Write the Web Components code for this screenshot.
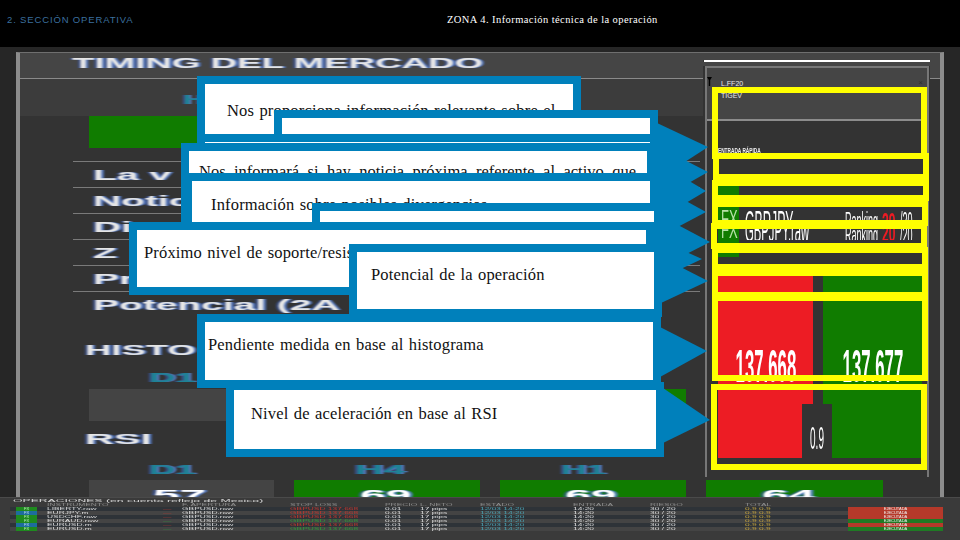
<!DOCTYPE html>
<html lang="es"><head><meta charset="utf-8"><title>Zona 4</title>
<style>
html,body{margin:0;padding:0;background:#000}
body{width:960px;height:540px;overflow:hidden;font-family:"Liberation Sans",sans-serif}
</style></head><body>
<x-slide>
  <x-header slot="head"></x-header>
  <x-market slot="main"></x-market>
  <x-orders slot="foot"></x-orders>

  <x-callout slot="over" x="197" y="76" w="384" h="66" px="22" py="17">Nos proporciona información relevante sobre el</x-callout>
  <x-callout slot="over" x="274" y="110" w="384" h="41" tip="708,147" up="123" down="180"></x-callout>
  <x-callout slot="over" x="197" y="134" w="461" h="40" tip="708,172" up="146" down="201"></x-callout>
  <x-callout slot="over" x="181" y="143" w="474" h="80" tip="706,191" up="160" down="222" px="10" py="11" just>Nos informará si hay noticia próxima referente al activo que</x-callout>
  <x-callout slot="over" x="184" y="173" w="474" h="60" tip="706,212" up="185" down="238" px="19" py="14">Información sobre posibles divergencias</x-callout>
  <x-callout slot="over" x="312" y="203" w="350" h="50" tip="710,242" up="216" down="267"></x-callout>
  <x-callout slot="over" x="129" y="222" w="525" h="73" tip="702,259" up="237" down="282" px="7" py="13">Próximo nivel de soporte/resistencia</x-callout>
  <x-callout slot="over" x="349" y="244" w="313" h="73" tip="708,281" up="257" down="303" px="14" py="13">Potencial de la operación</x-callout>
  <x-callout slot="over" x="197" y="314" w="464" h="74" tip="707,351" up="327" down="377" px="3" py="13">Pendiente medida en base al histograma</x-callout>
  <x-callout slot="over" x="226" y="382" w="438" h="75" tip="710,420" up="388" down="443" px="17" py="14">Nivel de aceleración en base al RSI</x-callout>

  <x-frame slot="over" x="712" y="87" w="215" h="72"></x-frame>
  <x-frame slot="over" x="713" y="153" w="216" h="27"></x-frame>
  <x-frame slot="over" x="712" y="180" w="217" h="21"></x-frame>
  <x-frame slot="over" x="712" y="201" w="216" h="25"></x-frame>
  <x-frame slot="over" x="711" y="223" w="216" h="26"></x-frame>
  <x-frame slot="over" x="712" y="247" w="216" h="23"></x-frame>
  <x-frame slot="over" x="712" y="270" w="216" h="28"></x-frame>
  <x-frame slot="over" x="712" y="295" w="216" h="86"></x-frame>
  <x-frame slot="over" x="711" y="384" w="216" h="86"></x-frame>
</x-slide>

<script>
function def(name, css, html, init){
  customElements.define(name, class extends HTMLElement{
    connectedCallback(){
      if(this.shadowRoot) return;
      const r=this.attachShadow({mode:"open"});
      r.innerHTML="<style>"+css+"</style>"+(typeof html==="function"?html(this):html);
      if(init) init(this,r);
    }
  });
}
def("x-slide",`:host{display:block;position:relative;width:960px;height:540px;overflow:hidden}
 .col{display:flex;flex-direction:column;height:100%}`,
 `<div class="col"><slot name="head"></slot><slot name="main"></slot><slot name="foot"></slot></div><slot name="over"></slot>`);

def("x-header",`:host{display:grid;grid-template-columns:447px 1fr;height:47px;background:#000;padding:0 0 0 7px;box-sizing:border-box;align-items:start}
 div{padding-top:13px;line-height:14px;font-family:"Liberation Serif",serif;font-size:10.5px;white-space:nowrap}
 .a{color:#3b6f9e;letter-spacing:.85px;font-family:"Liberation Sans",sans-serif;font-size:9.5px;font-weight:300}
 .b{color:#fff;letter-spacing:.42px;margin-left:-7px}`,
 `<div class="a">2. SECCIÓN OPERATIVA</div><div class="b">ZONA 4. Información técnica de la operación</div>`);

def("x-wide",`:host{display:block;height:100%;white-space:nowrap;font-family:"Liberation Sans",sans-serif;font-weight:700}
 span{display:inline-block;transform-origin:0 50%;color:var(--c,#e6e6e6);filter:blur(.35px)}`,
 h=>`<span style="transform:scaleX(${h.getAttribute('k')||2.4});font-size:${h.getAttribute('fs')||14}px;text-shadow:1px 0 rgba(90,130,210,.8),-1px 0 rgba(60,90,170,.6)"><slot></slot></span>`);

def("x-market",`:host{display:block;height:450px;box-sizing:border-box;background:#262626;padding:5px 16px 0;overflow:hidden}
 .panel{display:flex;height:445px;border-left:4px solid #8c8c8c;border-right:4px solid #8c8c8c;border-top:1px solid #6f6f6f;background:#333;box-sizing:border-box}
 .left{width:683px;flex:none;display:flex;flex-direction:column}
 .title{height:25px;background:#454545;border-bottom:1px solid #8a8a8a;padding-left:52px;line-height:20px;flex:none}
 .stub{flex:none;width:10px}.stub div{height:25px;background:#454545;border-bottom:1px solid #8a8a8a}
 .top{height:37px;background:#3c3c3c;flex:none;padding-left:163px;line-height:40px;--c:#1f8296}
 .g1{height:32px;width:140px;margin-left:69px;background:#107c00;flex:none}
 .rows{margin:13px 3px 0 53px;flex:none}
 .row{height:25px;border-top:1px solid #7a7a7a;padding-left:20px;line-height:25px}
 .h{margin-left:65px;height:24px;line-height:24px;flex:none}
 .grid{display:grid;grid-template-columns:185px 186px 186px 177px;column-gap:20px;margin-left:69px;width:794px;flex:none}
 .lab{--c:#1f8296;height:20px;line-height:20px}
 .box{background:#444}
 .bx{height:30px;background:#444;line-height:30px;--c:#fff}
 .gr{background:#107c00}
 .right{width:227px;flex:none;align-self:flex-start;position:relative}`,
 `<div class="panel">
  <div class="left">
   <div class="title"><x-wide k="2.62" fs="14">TIMING DEL MERCADO</x-wide></div>
   <div class="top"><x-wide k="2.3" fs="13">H</x-wide></div>
   <div class="g1"></div>
   <div class="rows">
    <div class="row"><x-wide k="2.78">La v</x-wide></div>
    <div class="row"><x-wide k="2.78">Notic</x-wide></div>
    <div class="row"><x-wide k="2.78">Di</x-wide></div>
    <div class="row"><x-wide k="2.78">Z</x-wide></div>
    <div class="row"><x-wide k="2.78">Pr</x-wide></div>
    <div class="row"><x-wide k="2.78">Potencial (2A</x-wide></div>
   </div>
   <div class="h" style="margin-top:21px"><x-wide k="2.6">HISTO</x-wide></div>
   <div class="grid" style="margin-top:5px;height:54px;grid-template-rows:22px 32px"><div class="lab" style="padding-left:60px"><x-wide k="2.8" fs="13">D1</x-wide></div><div></div><div></div><div></div>
     <div class="box"></div><div class="box"></div><div class="box gr"></div><div></div></div>
   <div class="h" style="margin-top:8px;height:20px;line-height:20px"><x-wide k="2.85">RSI</x-wide></div>
   <div class="grid" style="margin-top:10px;grid-template-rows:21px 30px">
     <div class="lab" style="padding-left:60px"><x-wide k="2.8" fs="13">D1</x-wide></div><div class="lab" style="padding-left:61px"><x-wide k="3" fs="13">H4</x-wide></div><div class="lab" style="padding-left:61px"><x-wide k="2.7" fs="13">H1</x-wide></div><div></div>
     <div class="bx" style="padding-left:64px"><x-wide k="3.4">57</x-wide></div><div class="bx gr" style="padding-left:66px"><x-wide k="3.3">69</x-wide></div><div class="bx gr" style="padding-left:65px"><x-wide k="3.3">69</x-wide></div><div class="bx gr" style="padding-left:56px"><x-wide k="3.4">64</x-wide></div>
   </div>
  </div>
  <div class="right"><x-trade></x-trade></div>
  <div class="stub"><div></div></div>
 </div>`);

def("x-trade",`:host{display:block;height:424px;position:relative;box-sizing:border-box;padding-top:7px;background:linear-gradient(#454545 0 7px,#333 7px)}
 .white{height:2px;background:#fff;margin-left:1px}
 .sp{height:4px;background:#454545}
 .box{border:2px solid #777;border-bottom:0;height:411px;margin-left:2px;margin-right:1px;box-sizing:border-box;background:#333}
 .head{height:51px;background:#454545;border-bottom:2px solid #8c8c8c;position:relative;display:flex;flex-direction:column;padding-left:14px;font-size:7px;color:#e8e8e8;line-height:12px}
 .head .t1{margin-top:10px}
 .tri{position:absolute;left:0;top:9px}
 .x{position:absolute;right:4px;top:9px;color:#2e2e2e;font-size:8px}
 .q{font-size:7px;font-weight:700;color:#eee;height:40px;padding:25px 0 0 11px;box-sizing:border-box;line-height:9px;white-space:nowrap}
 .q span{display:inline-block;transform:scaleX(.68);transform-origin:0 50%}
 .sym{height:25px}
 .fx{display:grid;grid-template-columns:21px 1fr;margin-left:11px;margin-right:5px;height:71px}
 .fxg{background:#107c00;color:#b7e2a8;padding:21px 0 0 3px;box-sizing:border-box}
 .fxg div{height:13px;overflow:hidden;font-size:13px;line-height:13px}
 .fxg div+div{margin-top:9px;height:11px}
 .fxg span{display:inline-block;transform:scale(1,1.8);transform-origin:0 0}
 .fxg div+div span{transform-origin:0 100%;vertical-align:bottom}
 .info{padding-top:21px;box-sizing:border-box;color:#fff}
 .line{display:grid;grid-template-columns:100px 37px 18px 30px;height:13px;overflow:hidden;padding-left:6px;white-space:nowrap;align-items:start}
 .l2{height:11px;margin-top:9px;align-items:end}
 .line span{display:inline-block;transform-origin:0 0;line-height:12px}
 .l2 span{transform-origin:0 100%}
 .big{font-size:15px;transform:scale(.82,2.2)}
 .l2 .big{transform:scale(.75,2.2)}
 .line .raw{font-size:6px;position:relative;left:-11px;top:6px;line-height:7px}
 .rk{font-size:11px;transform:scale(.82,2.2)}
 .v{font-size:11px;font-weight:700;color:#ed1c24;transform:scale(1.1,2.4)}
 .price{display:grid;grid-template-columns:95px 10px 99px;margin:13px 5px 0 11px;height:188px;position:relative}
 .r{background:#ed1c24}.g{background:#107c00}
 .pt{color:#fff;font-weight:700;text-align:center;padding-top:71px;box-sizing:border-box;font-size:16px;line-height:18px}
 .pt span{display:inline-block;transform:scale(1.05,2.9);transform-origin:50% 0}
 .spread{position:absolute;left:84px;top:134px;width:30px;height:60px;background:#333;color:#fff;font-size:10px;display:flex;justify-content:center;align-items:flex-end;padding-bottom:12px;box-sizing:border-box}
 .spread span{display:inline-block;transform:scale(1,3.1);transform-origin:50% 100%;line-height:9px}`,
 `<div class="white"></div><div class="sp"></div>
 <div class="box">
  <div class="head"><svg class="tri" width="5" height="9" viewBox="0 0 5 9"><path d="M0 0H5L3.2 3V9H1.8V3Z" fill="#000"/></svg>
   <span class="t1">L.FF20</span><span>TIGEV</span><span class="x">×</span></div>
  <div class="q"><span>ENTRADA RÁPIDA</span></div>
  <div class="sym"></div>
  <div class="fx">
   <div class="fxg"><div><span>FX</span></div><div><span>FX</span></div></div>
   <div class="info">
    <div class="line"><div><span class="big">GBPJPY</span><span class="raw">.raw</span></div><span class="rk">Ranking</span><span class="v">29</span><span class="rk">/20</span></div>
    <div class="line l2"><div><span class="big">GBPJPY.raw</span></div><span class="rk">Ranking</span><span class="v">20</span><span class="rk">/20</span></div>
   </div>
  </div>
  <div class="price">
   <div class="r pt"><span>137.668</span></div><div></div><div class="g pt"><span>137.677</span></div>
   <div class="spread"><span>0.9</span></div>
  </div>
 </div>`);

def("x-callout",`:host{position:absolute;display:block;box-sizing:border-box;border:8px solid #0080bb;background:#fff;color:#111;font-family:"Liberation Serif",serif;font-size:16.5px;line-height:20px}
 .t{white-space:nowrap;letter-spacing:.17px;word-spacing:1px}
 svg{position:absolute;left:0;top:0;overflow:visible;width:1px;height:1px}`,
 h=>{
  const n=k=>+h.getAttribute(k), x=n('x'), y=n('y');
  let s='';
  if(h.hasAttribute('tip')){
    const [tx,ty]=h.getAttribute('tip').split(',').map(Number);
    const ax=x+n('w'), ox=x+8, oy=y+8;
    s=`<svg viewBox="0 0 1 1"><polygon fill="#0080bb" points="${ax-ox-1},${n('up')-oy} ${tx-ox},${ty-oy} ${ax-ox-1},${n('down')-oy}"/></svg>`;
  }
  const st=`padding:${n('py')||0}px 0 0 ${n('px')||0}px;`+(h.hasAttribute('just')?`white-space:normal;text-align:justify;text-align-last:justify;width:437px;letter-spacing:0;word-spacing:0;`:'');
  return s+`<div class="t" style="${st}"><slot></slot></div>`;
 },
 h=>{
  const s=h.style, n=k=>h.getAttribute(k)+'px';
  s.left=n('x');s.top=n('y');s.width=n('w');s.height=n('h');
 });

def("x-frame",`:host{position:absolute;display:block;box-sizing:border-box;border:6px solid #ffff00}`,``,
 h=>{const s=h.style,n=k=>h.getAttribute(k)+'px';s.left=n('x');s.top=n('y');s.width=n('w');s.height=n('h');});

def("x-orders",`:host{display:block;height:43px;box-sizing:border-box;background:#3a3a3a;border-top:1px solid #4a4a4a;padding:1px 17px 0 10px;color:#ddd;font-family:"Liberation Sans",sans-serif;font-size:4px;overflow:hidden;filter:blur(.3px)}
 .cap{height:3.5px;line-height:3.5px;padding-left:3px;color:#d8d8d8;white-space:nowrap}
 .cap i{font-style:normal;display:inline-block;transform:scaleX(3.05);transform-origin:0 50%}
 .row{display:grid;grid-template-columns:31px 116px 19px 108px 95px 35px 60px 93px 77px 95px 103px 95px;height:4.1px;line-height:4.1px;white-space:nowrap;padding-left:6px}
 .row i{font-style:normal;display:inline-block;transform:scaleX(2.1);transform-origin:0 50%}
 .hd{color:#8d8d8d;height:4px;line-height:4px}
 .o{background:#2e3338}.e{background:#444}
 .bg{background:#1f8a1f;color:#bfeec0;width:21px;text-align:center}
 .bb{background:#1d6d9d;color:#bfe0ef;width:21px;text-align:center}
 .red{color:#c0372f}.grn{color:#2f9a3a}.tl{color:#4aa0b0}.yl{color:#c7a53d}
 .row .bg i,.row .bb i,.row .cr i,.row .cg i{transform:none}
 .cr{background:#b5392a;color:#eee;text-align:center}.cg{background:#1f7a24;color:#eee;text-align:center}`,
 ()=>{
  const data=[["bg","LIBERTY.raw","red","GBPUSD.raw","red","cr"],["bb","EURJPY.m","red","GBPUSD.raw","red","cr"],["bg","USDCHF.raw","red","GBPUSD.raw","red","cr"],["bg","EURAUD.raw","grn","GBPUSD.raw","grn","cg"],["bb","EURUSD.m","red","GBPUSD.raw","red","cr"],["bg","EURUSD.m","grn","GBPUSD.raw","grn","cg"]];
  const c=(k,t)=>`<span class="${k}"><i>${t}</i></span>`;
  let o=`<div class="cap"><i>OPERACIONES (en cuenta reflejo de Mexico)</i></div>
  <div class="row hd"><span></span>${c('','INSTRUMENTO')}<span></span>${c('','F. APERTURA')}${c('','STOP LOSS')}${c('','PRECIO')}${c('','L. NETO')}${c('','ESTADO')}${c('','ENTRADA')}${c('','RIESGO')}${c('','TOTAL')}<span></span></div>`;
  data.forEach((d,i)=>{
   o+=`<div class="row ${i%2?'e':'o'}">${c(d[0],'FX')}${c('',d[1])}${c(d[2],'—')}${c('',d[3])}${c(d[4],'GBPUSD 137.668')}${c('','0.01')}${c('','17 pips')}${c('tl','12/03 14:20')}${c('','14:20')}${c('','30 / 20')}${c('yl','0.9 0.9')}${c(d[5],'EJECUTADA')}</div>`;
  });
  return o;
 });
</script>
</body></html>
